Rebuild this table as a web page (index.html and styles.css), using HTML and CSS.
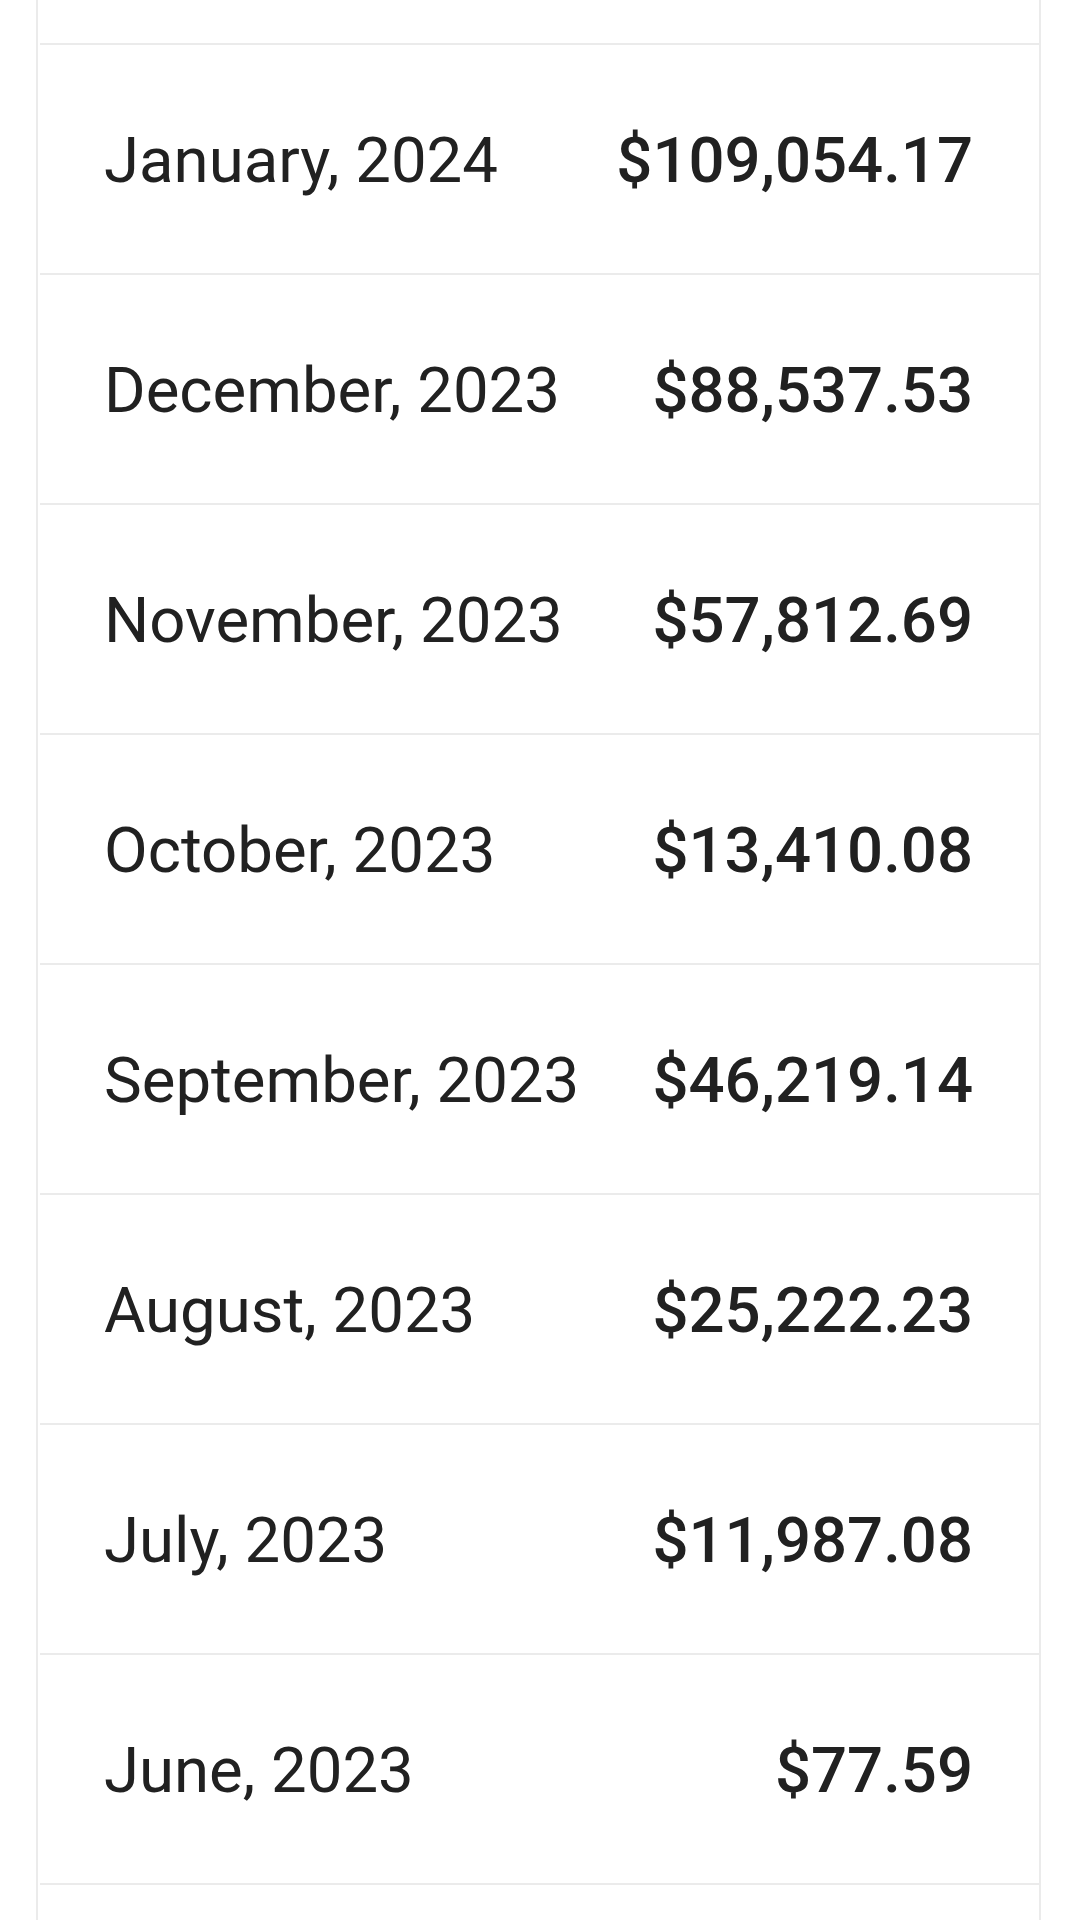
FILE: index.html
```html
<!DOCTYPE html>
<html lang="en">
<head>
    <meta charset="UTF-8">
    <title>Monthly Totals</title>
    <link rel="stylesheet" href="styles.css">
</head>
<body>
    <ul class="statement">
        <li class="row row-cut"></li>
        <li class="row"><span class="month">January, 2024</span><span class="amount">$109,054.17</span></li>
        <li class="row"><span class="month">December, 2023</span><span class="amount">$88,537.53</span></li>
        <li class="row"><span class="month">November, 2023</span><span class="amount">$57,812.69</span></li>
        <li class="row"><span class="month">October, 2023</span><span class="amount">$13,410.08</span></li>
        <li class="row"><span class="month">September, 2023</span><span class="amount">$46,219.14</span></li>
        <li class="row"><span class="month">August, 2023</span><span class="amount">$25,222.23</span></li>
        <li class="row"><span class="month">July, 2023</span><span class="amount">$11,987.08</span></li>
        <li class="row"><span class="month">June, 2023</span><span class="amount">$77.59</span></li>
        <li class="row"></li>
    </ul>
</body>
</html>
```

FILE: styles.css
```css
body {
    margin: 0;
    background-color: #ffffff;
    font-family: Roboto, "Noto Sans", sans-serif;
    color: #212121;
    overflow: hidden;
}

.statement {
    list-style: none;
    margin: 0 0 0 36px;
    padding: 0;
    width: 1005px;
    box-sizing: border-box;
    border-left: 2px solid #ebebeb;
    border-right: 2px solid #ebebeb;
}

.row {
    display: flex;
    justify-content: space-between;
    align-items: center;
    height: 230px;
    padding: 2px 66px 0 64px;
    box-sizing: border-box;
    margin-left: 2px;
    border-bottom: 2px solid #ebebeb;
    font-size: 63.5px;
}

.row-cut {
    height: 45px;
}

.month {
    font-weight: 400;
}

.amount {
    font-weight: 500;
}
```
